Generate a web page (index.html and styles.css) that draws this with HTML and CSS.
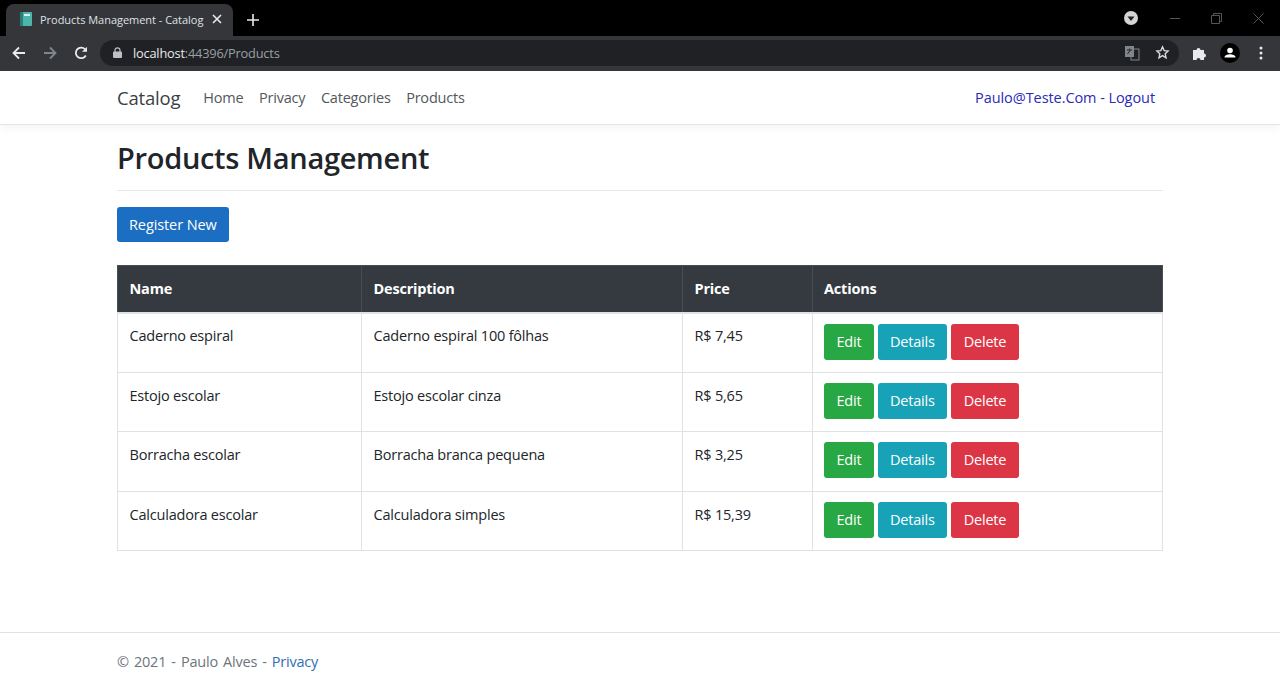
FILE: index.html
```html
<!DOCTYPE html>
<html>
<head>
	<meta charset="UTF-8">
	<title>Products Management - Catalog</title>
	<link rel="stylesheet" href="styles.css">
</head>
<body>
	<div class="tabbar">
		<div class="tab">
			<svg class="favicon" width="14" height="16" viewBox="0 0 14 16"><rect x="1" y="1" width="12" height="14" rx="1" fill="#4db6ac"/><rect x="1" y="1" width="3" height="14" fill="#26807a"/><rect x="5" y="3" width="6" height="2" fill="#d7f0ec"/></svg>
			<span class="tab-title">Products Management - Catalog</span>
			<svg class="tab-close" width="10" height="10" viewBox="0 0 10 10"><path d="M1 1l8 8M9 1l-8 8" stroke="#e8eaed" stroke-width="1.6"/></svg>
		</div>
		<svg class="new-tab" width="14" height="14" viewBox="0 0 14 14"><path d="M7 1v12M1 7h12" stroke="#e8eaed" stroke-width="1.6"/></svg>
		<div class="window-controls">
			<svg class="profile-dot" width="16" height="16" viewBox="0 0 16 16"><circle cx="8" cy="8" r="7" fill="#d5d5d5"/><path d="M4.5 6.5h7L8 11z" fill="#222"/></svg>
			<svg width="10" height="10" viewBox="0 0 10 10"><path d="M0 5.5h10" stroke="#555"/></svg>
			<svg width="11" height="11" viewBox="0 0 11 11"><path d="M.5 2.5h8v8h-8zM2.5 2.5v-2h8v8h-2" fill="none" stroke="#555"/></svg>
			<svg width="11" height="11" viewBox="0 0 11 11"><path d="M.5.5l10 10M10.5.5l-10 10" stroke="#555"/></svg>
		</div>
	</div>
	<div class="toolbar">
		<svg class="tool" width="14" height="14" viewBox="0 0 14 14"><path d="M13 7H2M7 1.5L1.5 7 7 12.500" fill="none" stroke="#e8eaed" stroke-width="1.8"/></svg>
		<svg class="tool" width="14" height="14" viewBox="0 0 14 14"><path d="M1 7h11M7 1.500L12.500 7 7 12.500" fill="none" stroke="#80868b" stroke-width="1.8"/></svg>
		<svg class="tool" width="14" height="14" viewBox="0 0 14 14"><path d="M11.800 9.500A5.300 5.300 0 1 1 11 3.200" fill="none" stroke="#e8eaed" stroke-width="1.800"/><path d="M13 .8v5H8z" fill="#e8eaed"/></svg>
		<div class="omnibox">
			<svg class="lock" width="9" height="11" viewBox="0 0 9 11"><path d="M2 5V3.300a2.500 2.500 0 0 1 5 0V5" fill="none" stroke="#bdc1c6" stroke-width="1.200"/><rect y="4.500" width="9" height="6.500" rx="1" fill="#bdc1c6"/></svg>
			<span class="url"><b>localhost</b>:44396/Products</span>
			<svg class="translate" width="16" height="16" viewBox="0 0 16 16"><rect x="1" y="1" width="9" height="11" fill="#80868b"/><rect x="7" y="4" width="8" height="11" fill="none" stroke="#80868b"/><path d="M3 5h5M5.500 3.500v1M3.500 9l3-4" stroke="#202124" fill="none"/></svg>
			<svg width="15" height="15" viewBox="0 0 24 24"><path d="M12 3l2.700 6 6.300.7-4.700 4.300 1.300 6.500L12 17l-5.600 3.500L7.700 14 3 9.700 9.300 9z" fill="none" stroke="#dadce0" stroke-width="2.200"/></svg>
		</div>
		<svg class="extensions" width="16" height="16" viewBox="0 0 16 16"><path d="M1 5h3.500a2 2 0 1 1 4 0H12v3.500a2 2 0 1 1 0 4V15H8.500a2 2 0 1 0-4 0H1z" fill="#e8eaed"/></svg>
		<svg class="avatar" width="20" height="20" viewBox="0 0 20 20"><circle cx="10" cy="10" r="10" fill="#000"/><circle cx="10" cy="7.500" r="2.800" fill="#fff"/><path d="M4.500 14.500c0-2 3-3.200 5.500-3.200s5.500 1.200 5.500 3.200z" fill="#fff"/></svg>
		<svg class="menu" width="4" height="14" viewBox="0 0 4 14"><circle cx="2" cy="2" r="1.500" fill="#e8eaed"/><circle cx="2" cy="7" r="1.500" fill="#e8eaed"/><circle cx="2" cy="12" r="1.500" fill="#e8eaed"/></svg>
	</div>

	<nav class="navbar">
		<div class="container navbar-inner">
			<a class="brand">Catalog</a>
			<ul class="nav-links">
				<li>Home</li>
				<li>Privacy</li>
				<li>Categories</li>
				<li>Products</li>
			</ul>
			<a class="account">Paulo@Teste.Com - Logout</a>
		</div>
	</nav>

	<main class="container">
		<h1 class="title">Products Management</h1>
		<a class="btn btn-primary register">Register New</a>

		<table class="products">
			<thead>
				<tr>
					<th class="col-name">Name</th>
					<th class="col-desc">Description</th>
					<th class="col-price">Price</th>
					<th>Actions</th>
				</tr>
			</thead>
			<tbody>
				<tr>
					<td>Caderno espiral</td>
					<td>Caderno espiral 100 fôlhas</td>
					<td>R$ 7,45</td>
					<td><div class="actions"><a class="btn btn-success">Edit</a><a class="btn btn-info">Details</a><a class="btn btn-danger">Delete</a></div></td>
				</tr>
				<tr>
					<td>Estojo escolar</td>
					<td>Estojo escolar cinza</td>
					<td>R$ 5,65</td>
					<td><div class="actions"><a class="btn btn-success">Edit</a><a class="btn btn-info">Details</a><a class="btn btn-danger">Delete</a></div></td>
				</tr>
				<tr>
					<td>Borracha escolar</td>
					<td>Borracha branca pequena</td>
					<td>R$ 3,25</td>
					<td><div class="actions"><a class="btn btn-success">Edit</a><a class="btn btn-info">Details</a><a class="btn btn-danger">Delete</a></div></td>
				</tr>
				<tr>
					<td>Calculadora escolar</td>
					<td>Calculadora simples</td>
					<td>R$ 15,39</td>
					<td><div class="actions"><a class="btn btn-success">Edit</a><a class="btn btn-info">Details</a><a class="btn btn-danger">Delete</a></div></td>
				</tr>
			</tbody>
		</table>
	</main>

	<footer class="footer">
		<div class="container">© 2021 - Paulo Alves - <a class="footer-link">Privacy</a></div>
	</footer>
</body>
</html>
```

FILE: styles.css
```css
* {
	box-sizing: border-box;
}

body {
	margin: 0;
	background-color: #fff;
	color: #212529;
	font-family: "Open Sans", "Noto Sans", "Liberation Sans", sans-serif;
	font-size: 14.5px;
	letter-spacing: -0.2px;
}

/* browser window */
.tabbar {
	display: flex;
	align-items: flex-end;
	height: 36px;
	padding-left: 6px;
	background-color: #000;
}

.tab {
	display: flex;
	align-items: center;
	width: 227px;
	height: 32px;
	padding: 0 11px 2px 13px;
	border-radius: 8px 8px 0 0;
	background-color: #35363a;
}

.favicon {
	flex: none;
}

.tab-title {
	flex: 1;
	margin-left: 7px;
	color: #dfe1e5;
	font-size: 11px;
	letter-spacing: -0.03px;
	white-space: nowrap;
}

.new-tab {
	align-self: center;
	margin: 3px 0 0 13px;
}

.window-controls {
	display: flex;
	align-items: center;
	align-self: center;
	gap: 31px;
	margin-left: auto;
	padding-right: 16px;
}

.toolbar {
	display: flex;
	align-items: center;
	height: 35px;
	padding-left: 12px;
	padding-bottom: 2px;
	background-color: #35363a;
}

.tool {
	flex: none;
	margin-right: 17px;
}

.omnibox {
	display: flex;
	align-items: center;
	width: 1079px;
	height: 26px;
	margin-left: -5px;
	padding: 0 9px 0 13px;
	border-radius: 13px;
	background-color: #202124;
}

.url {
	flex: 1;
	margin-left: 11px;
	color: #9aa0a6;
	font-size: 12.800px;
	letter-spacing: -0.2px;
}

.url b {
	color: #e8eaed;
	font-weight: 400;
}

.translate {
	margin-right: 15px;
}

.extensions {
	margin-left: 13px;
}

.avatar {
	margin-left: 12px;
}

.menu {
	margin-left: 19px;
}

/* page */
.container {
	width: 1046px;
	margin: 0 auto;
}

.navbar {
	height: 54px;
	border-bottom: 1px solid #e5e5e5;
	box-shadow: 0 4px 8px rgba(0, 0, 0, .04);
}

.navbar-inner {
	display: flex;
	align-items: center;
	height: 53px;
}

.brand {
	color: #3a3f44;
	font-size: 18.500px;
}

.nav-links {
	display: flex;
	gap: 15.500px;
	margin: 0 0 0 23px;
	padding: 0;
	list-style: none;
	color: #52585d;
}

.account {
	margin-left: auto;
	padding-right: 8px;
	color: #2a2ab8;
	letter-spacing: -0.07px;
}

.title {
	margin: 0;
	padding: 13px 0 12px;
	border-bottom: 1px solid #e6e6e6;
	font-size: 29px;
	font-weight: 600;
	line-height: 40px;
	letter-spacing: -0.3px;
}

.btn {
	display: inline-block;
	height: 36px;
	padding: 0 12px;
	border-radius: 3px;
	color: #fff;
	line-height: 36px;
}

.register {
	height: 35px;
	margin-top: 16px;
	padding-right: 12px;
	background-color: #1b6ec2;
	line-height: 35px;
	letter-spacing: -0.1px;
}

.btn-primary {
	background-color: #1b6ec2;
}

.btn-success {
	padding: 0 12.500px;
	background-color: #28a745;
}

.btn-info {
	background-color: #17a2b8;
}

.btn-danger {
	padding: 0 13px;
	background-color: #dc3545;
}

.products {
	width: 100%;
	margin-top: 23px;
	border-collapse: collapse;
	table-layout: fixed;
}

.products th, .products td {
	padding: 12px 12px 0 11.500px;
	border: 1px solid #dee2e6;
	text-align: left;
	vertical-align: top;
}

.products th {
	height: 47px;
	border-color: #454d55;
	border-bottom: 2px solid #dee2e6;
	background-color: #343a40;
	color: #fff;
	font-weight: 700;
	line-height: 21px;
}

.products th + th {
	border-left-color: #dee2e6;
}

.products td {
	height: 60px;
	line-height: 22px;
}

.products tbody tr:nth-child(even) td {
	height: 59px;
}

.products tbody tr:first-child td {
	padding-top: 11px;
}

.products th:last-child, .products td:last-child {
	padding-left: 11px;
}

.products tbody tr td:last-child {
	padding-top: 10px;
}

.col-name {
	width: 244px;
}

.col-desc {
	width: 321px;
}

.col-price {
	width: 130px;
}

.actions {
	display: flex;
	gap: 4px;
}

.footer {
	margin-top: 81px;
	height: 57px;
	padding-top: 17px;
	border-top: 1px solid #dee2e6;
	color: #6c757d;
	line-height: 24px;
	word-spacing: 1.500px;
}

.footer-link {
	color: #2f6fb3;
}
```
